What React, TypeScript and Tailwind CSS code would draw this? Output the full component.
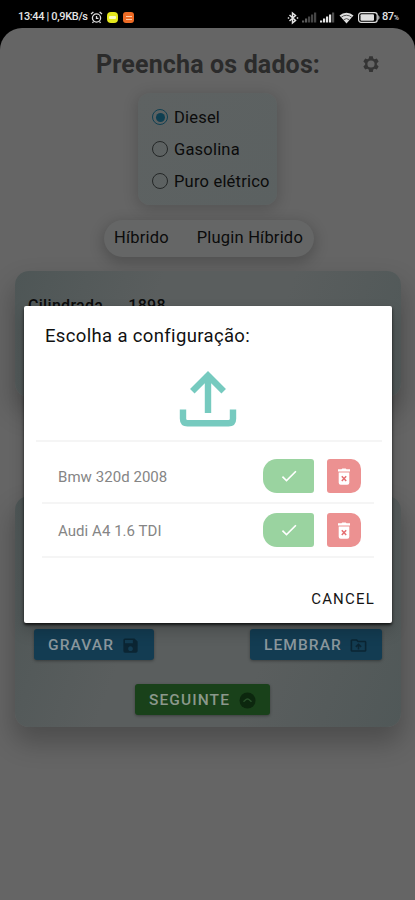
import type { ReactNode } from 'react';
import { MdSave, MdOutlineDriveFolderUpload, MdCheck } from 'react-icons/md';

type Config = { id: number; name: string };

const configs: Config[] = [
  { id: 1, name: 'Bmw 320d 2008' },
  { id: 2, name: 'Audi A4 1.6 TDI' },
];

const fuels = ['Diesel', 'Gasolina', 'Puro elétrico'];

export default function App() {
  return (
    <div className="relative h-[900px] w-[415px] overflow-hidden bg-black font-['Roboto',sans-serif]">
      <StatusBar />

      <main className="flex h-[872px] flex-col overflow-hidden rounded-t-[22px] bg-[#656565]">
        <header className="flex h-[65px] shrink-0 items-center pt-[6px] pl-[96px]">
          <h1 className="w-[225px] pt-[1px] text-[25px] leading-none font-bold tracking-[0.15px] whitespace-nowrap text-[#2b2b2b]">
            Preencha os dados:
          </h1>
          <GearIcon />
        </header>

        <FuelOptions selected="Diesel" />

        <div className="mt-[15px] ml-[104px] flex h-[37px] w-[210px] shrink-0 items-center justify-between rounded-full bg-[#656666] pr-[11px] pl-[10px] text-[16.5px] tracking-[0.2px] text-[#0b0b0b] shadow-[0_4px_14px_2px_rgba(0,0,0,0.2)]">
          <span>Híbrido</span>
          <span>Plugin Híbrido</span>
        </div>

        <Panel className="mt-[14px] h-[126px]">
          <div className="flex gap-[25px] pt-[25px] pl-[13px] text-[16px] leading-[20px] font-medium tracking-[0.3px] text-[#0b0b0b]">
            <span>Cilindrada</span>
            <span>1898</span>
          </div>
        </Panel>

        <Panel className="mt-[99px] h-[231px] flex-col justify-end">
          <div className="flex justify-between pr-[19px] pl-[19px]">
            <ActionButton className="w-[120px] bg-[#133c52] text-[#8b979d]">
              GRAVAR
              <MdSave className="size-[19px] text-[#0b2533]" />
            </ActionButton>
            <ActionButton className="w-[132px] bg-[#133c52] text-[#8b979d]">
              LEMBRAR
              <MdOutlineDriveFolderUpload className="size-[19px] text-[#0b2533]" />
            </ActionButton>
          </div>
          <ActionButton className="mt-[24px] mb-[12px] ml-[120px] w-[135px] bg-[#19411a] text-[#8b988b]">
            SEGUINTE
            <NextIcon />
          </ActionButton>
        </Panel>
      </main>

      <ConfigDialog />
    </div>
  );
}

function FuelOptions({ selected }: { selected: string }) {
  return (
    <div className="ml-[138px] flex h-[112px] w-[139px] shrink-0 flex-col rounded-[12px] bg-[linear-gradient(135deg,#5e6262,#5b6161)] pt-[8px] pl-[14px] shadow-[0_3px_14px_2px_rgba(0,0,0,0.16)]">
      {fuels.map((fuel) => (
        <label key={fuel} className="flex h-[32px] items-center gap-[6px] text-[16.5px] tracking-[0.2px] text-[#0b0b0b]">
          <span
            className={
              fuel === selected
                ? 'flex size-[16px] items-center justify-center rounded-full border-[1.5px] border-[#0f3f51]'
                : 'size-[16px] rounded-full border-[1.5px] border-[#242727]'
            }
          >
            {fuel === selected && <span className="size-[9px] rounded-full bg-[#0f3f51]" />}
          </span>
          <span className="pt-[2px]">{fuel}</span>
        </label>
      ))}
    </div>
  );
}

function Panel({ className, children }: { className: string; children: ReactNode }) {
  return (
    <section
      className={`ml-[15px] flex w-[386px] shrink-0 rounded-[14px] bg-[linear-gradient(110deg,#4e5656_0%,#5a5e5e_35%,#5a5e5e_65%,#505858_100%)] shadow-[0_14px_26px_2px_rgba(0,0,0,0.24)] ${className}`}
    >
      {children}
    </section>
  );
}

function ActionButton({ className, children }: { className: string; children: ReactNode }) {
  return (
    <button
      className={`flex h-[31px] items-center justify-between rounded-[3px] pt-[2px] pr-[14px] pl-[14px] text-[15.5px] font-medium tracking-[1.1px] shadow-[0_1px_3px_rgba(0,0,0,0.35)] ${className}`}
    >
      {children}
    </button>
  );
}

function ConfigDialog() {
  return (
    <div
      role="dialog"
      className="absolute top-[306px] left-[24px] flex h-[317px] w-[368px] flex-col rounded-[2px] bg-white shadow-[0_2px_3px_rgba(0,0,0,0.75),0_8px_16px_rgba(0,0,0,0.2)]"
    >
      <h2 className="h-[64px] pt-[19px] pl-[21px] text-[18.5px] leading-[22px] tracking-[0.35px] text-[#111]">
        Escolha a configuração:
      </h2>
      <div className="mr-[10px] ml-[12px] flex h-[72px] shrink-0 justify-center border-b-2 border-[#f5f5f5] pr-[2px]">
        <UploadIcon />
      </div>
      <ul className="mt-[8px] mr-[18px] ml-[18px]">
        {configs.map((config) => (
          <li key={config.id} className="flex h-[54px] items-center border-b-2 border-[#f5f5f5] pl-[16px]">
            <span className="flex-1 pt-[2px] text-[15px] tracking-[0.05px] text-[#858585]">{config.name}</span>
            <button className="flex h-[34px] w-[51px] items-center justify-center rounded-l-[14px] rounded-r-[3px] bg-[#9ad3a0]">
              <MdCheck className="size-[20px] text-white" />
            </button>
            <button className="mr-[13px] ml-[13px] flex h-[34px] w-[34px] items-center justify-center rounded-l-[3px] rounded-r-[10px] bg-[#ec9191] pt-[2px]">
              <TrashIcon />
            </button>
          </li>
        ))}
      </ul>
      <button className="mt-[30px] mr-[17px] self-end text-[15px] leading-[22px] tracking-[1.2px] text-[#151515]">
        CANCEL
      </button>
    </div>
  );
}

function StatusBar() {
  return (
    <div className="flex h-[28px] items-center pt-[7px] pl-[18px] text-[11px] font-medium text-[#e4e4e4]">
      <span className="w-[71px] text-[11px] tracking-[-0.35px] whitespace-nowrap">13:44 | 0,9KB/s</span>
      <svg className="ml-[1px] h-[13px] w-[13px]" viewBox="0 0 13 13" fill="none" stroke="#dedede" strokeWidth="1.3">
        <circle cx="6.5" cy="7" r="4.1" />
        <path d="M1 3 3.4 1M12 3 9.6 1M6.5 5v2.3h2M3.5 10.5 2.5 12M9.5 10.5l1 1.5" />
      </svg>
      <span className="ml-[4px] flex size-[11px] items-center justify-center rounded-[4px] bg-[#e5e81c]">
        <span className="h-[3px] w-[7px] rounded-[1px] bg-[#fafbc0]" />
      </span>
      <span className="ml-[5px] flex size-[11px] flex-col items-center justify-center gap-[2px] rounded-[3px] bg-[#ee6b25]">
        <span className="h-[1px] w-[6px] bg-[#ffc8a5]" />
        <span className="h-[1px] w-[6px] bg-[#ffc8a5]" />
      </span>
      <svg className="ml-[153px] h-[14px] w-[12px]" viewBox="0 0 12 14" fill="none" stroke="#e4e4e4" strokeWidth="1.5">
        <path d="m2.5 4 6 5.5L5.5 12V2l3 2.5-6 5.5" />
        <path d="M.8 7h1.4M9.8 7h1.4" />
      </svg>
      <SignalBars className="ml-[3px] text-[#5c5c5c]" level={2} />
      <SignalBars className="ml-[3px] text-[#e4e4e4]" level={4} />
      <svg className="ml-[4px] h-[12px] w-[15px]" viewBox="0 0 15 12">
        <path d="M.5 3.5a10.5 10.5 0 0 1 14 0L7.5 11.5Z" fill="#dedede" />
        <path d="M2.3 5.2a8 8 0 0 1 10.4 0M4.7 7.7a4.5 4.5 0 0 1 5.6 0" fill="none" stroke="#333" strokeWidth=".8" />
      </svg>
      <svg className="ml-[4px] h-[11px] w-[22px]" viewBox="0 0 22 11">
        <rect x=".6" y=".6" width="18.6" height="9.8" rx="2.6" fill="none" stroke="#dedede" strokeWidth="1.2" />
        <rect x="2.5" y="2.3" width="13.5" height="6.4" rx="1" fill="#dedede" />
        <path d="M20.3 3.2c1.5.6 1.5 4 0 4.6Z" fill="#dedede" />
      </svg>
      <span className="ml-[2px] text-[11px] tracking-[-0.4px]">
        87<span className="text-[7px]">%</span>
      </span>
    </div>
  );
}

function SignalBars({ className, level }: { className: string; level: number }) {
  return (
    <svg className={`h-[11px] w-[15px] ${className}`} viewBox="0 0 15 11" fill="currentColor">
      {[2, 4, 6, 8, 10].map((h, i) => (
        <rect key={h} x={i * 3} y={10.5 - h} width="2.2" height={h} opacity={i < level ? 1 : level < 4 ? 0.75 : 0.35} />
      ))}
    </svg>
  );
}

// Six-toothed settings cog
function GearIcon() {
  return (
    <svg className="ml-[41px] size-[18px] text-[#353535]" viewBox="0 0 24 24" fill="currentColor" fillRule="evenodd">
      <path d="M9.6 1.5h4.8l.6 3.2 1.8 1 3-1.1 2.4 4.2-2.4 2.1v2.2l2.4 2.1-2.4 4.2-3-1.1-1.8 1-.6 3.2H9.6L9 19.3l-1.8-1-3 1.1-2.4-4.2 2.4-2.1v-2.2L1.8 8.8l2.4-4.2 3 1.1 1.8-1ZM12 7.2a4.8 4.8 0 1 0 0 9.6 4.8 4.8 0 0 0 0-9.6Z" />
    </svg>
  );
}

function UploadIcon() {
  return (
    <svg className="h-[57px] w-[58px]" viewBox="0 0 58 57" fill="none" stroke="#76cabf" strokeWidth="6.4">
      <path d="M29 43V4M13.3 21.2 29 5.5l15.7 15.7" />
      <path d="M4 39.5v9.3q0 4.5 4.5 4.5h41q4.5 0 4.5-4.5v-9.3" />
    </svg>
  );
}

function TrashIcon() {
  return (
    <svg className="h-[18px] w-[14px]" viewBox="0 0 14 18" fill="white">
      <path d="M4.5 1.2 5.3.4h3.4l.8.8H13v2.2H1V1.2ZM1.7 4.6h10.6v10.2q0 2-2 2H3.7q-2 0-2-2Z" />
      <path d="m4.8 8.2 4.4 4.8M9.2 8.2 4.8 13" stroke="#e56f72" strokeWidth="1.5" />
    </svg>
  );
}

function NextIcon() {
  return (
    <svg className="size-[17px]" viewBox="0 0 17 17">
      <circle cx="8.5" cy="8.5" r="8" fill="#0c270e" />
      <path d="M4.5 9.8 7 7.5q1.5-1.2 3 0l2.5 2.3" fill="none" stroke="#28502a" strokeWidth="1.5" />
    </svg>
  );
}
